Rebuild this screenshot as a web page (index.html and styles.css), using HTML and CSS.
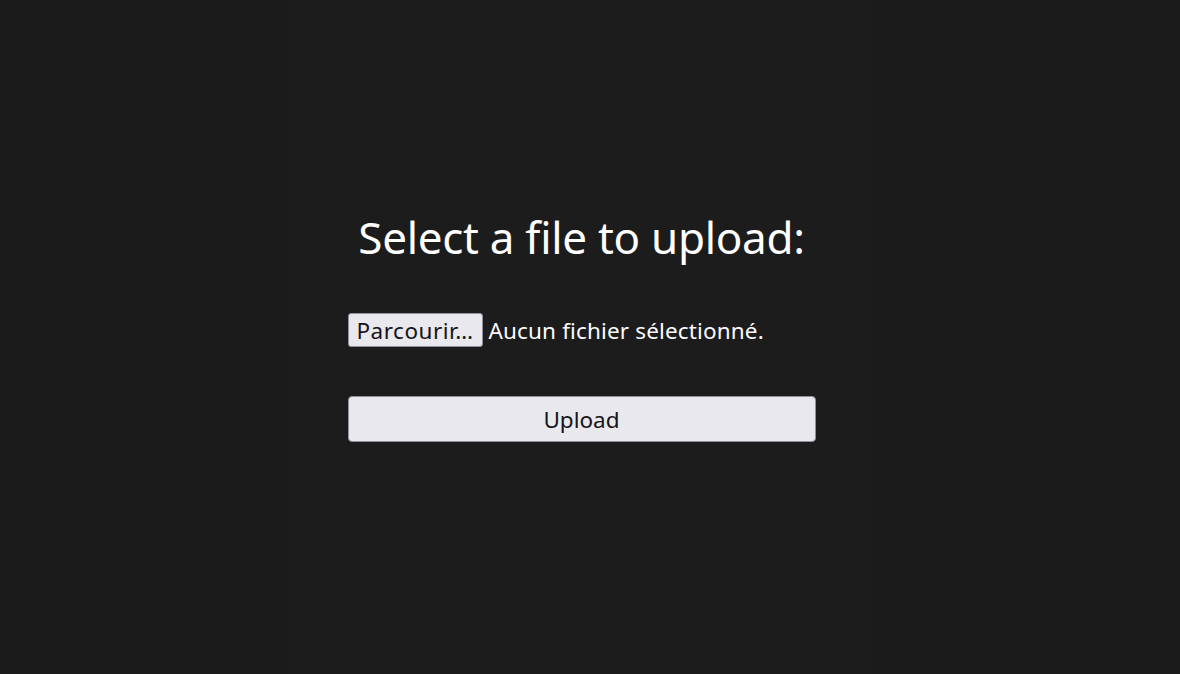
FILE: index.html
```html
<!DOCTYPE html>
<html lang="fr">
<head>
<meta charset="utf-8">
<title>Upload</title>
<link rel="stylesheet" href="styles.css">
</head>
<body>
<div class="page">
  <main class="column">
    <h1 class="title">Select a file to upload:</h1>
    <form class="form">
      <div class="file-row">
        <span class="file-btn">Parcourir…</span>
        <span class="file-label">Aucun fichier sélectionné.</span>
      </div>
      <button type="button" class="upload">Upload</button>
    </form>
  </main>
</div>
</body>
</html>
```

FILE: styles.css
```css
html, body {
  margin: 0;
  height: 100%;
  background: #1b1b1b;
}
.page {
  display: grid;
  grid-template-columns: 289px 585px 1fr;
  height: 100%;
}
.column {
  grid-column: 2;
  background: #1c1c1c;
  display: flex;
  flex-direction: column;
  align-items: center;
  padding-top: 207px;
  font-family: "Noto Sans", sans-serif;
}
.title {
  margin: 0;
  color: #ffffff;
  font-weight: 400;
  font-size: 44px;
  line-height: 60px;
  letter-spacing: -0.3px;
}
.form {
  width: 468px;
  margin-top: 46px;
  display: flex;
  flex-direction: column;
  gap: 49px;
}
.file-row {
  display: flex;
  align-items: center;
  gap: 5px;
  height: 34px;
}
.file-btn {
  box-sizing: border-box;
  height: 34px;
  padding: 0 9px 0 8px;
  display: flex;
  align-items: center;
  background: #e9e8ed;
  border: 1px solid #8f8f9d;
  border-radius: 3px;
  color: #15141a;
  font-size: 22.5px;
  letter-spacing: 0.5px;
}
.file-label {
  color: #fbfbfe;
  font-size: 22.5px;
  letter-spacing: 0.15px;
}
.upload {
  box-sizing: border-box;
  width: 468px;
  height: 46px;
  background: #e9e8ed;
  border: 1px solid #8f8f9d;
  border-radius: 4px;
  color: #15141a;
  font-family: "Noto Sans", sans-serif;
  font-size: 22.5px;
  padding: 0;
}
```
